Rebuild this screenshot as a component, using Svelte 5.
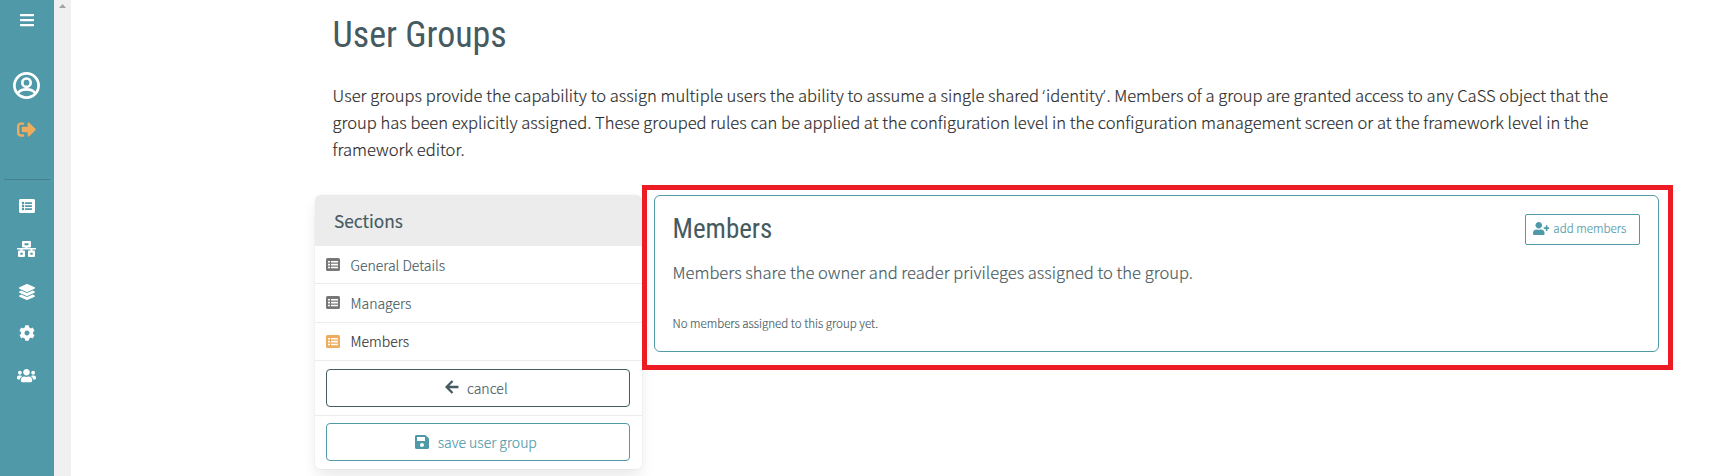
<script>
  const sections = [
    { label: 'General Details', active: false },
    { label: 'Managers', active: false },
    { label: 'Members', active: true }
  ];
</script>

{#snippet listAlt()}
  <svg class="list-icon" viewBox="0 0 512 512" fill="currentColor" aria-hidden="true"><path d="M464 480H48c-26.51 0-48-21.49-48-48V80c0-26.51 21.49-48 48-48h416c26.51 0 48 21.49 48 48v352c0 26.51-21.49 48-48 48zM128 120c-22.091 0-40 17.909-40 40s17.909 40 40 40 40-17.909 40-40-17.909-40-40-40zm0 96c-22.091 0-40 17.909-40 40s17.909 40 40 40 40-17.909 40-40-17.909-40-40-40zm0 96c-22.091 0-40 17.909-40 40s17.909 40 40 40 40-17.909 40-40-17.909-40-40-40zm288-136v-32c0-6.627-5.373-12-12-12H204c-6.627 0-12 5.373-12 12v32c0 6.627 5.373 12 12 12h200c6.627 0 12-5.373 12-12zm0 96v-32c0-6.627-5.373-12-12-12H204c-6.627 0-12 5.373-12 12v32c0 6.627 5.373 12 12 12h200c6.627 0 12-5.373 12-12zm0 96v-32c0-6.627-5.373-12-12-12H204c-6.627 0-12 5.373-12 12v32c0 6.627 5.373 12 12 12h200c6.627 0 12-5.373 12-12z"/></svg>
{/snippet}

{#snippet tableList()}
  <svg class="table-icon" viewBox="0 0 14 13" aria-hidden="true"><rect width="14" height="13" rx="1.6" fill="currentColor"/><path d="M2 3h2v1.600H2zM5 3h7v1.600H5zM2 5.800h2v1.700H2zM5 5.800h7v1.700H5zM2 8.700h2v1.600H2zM5 8.700h7v1.600H5z" fill="#fff"/></svg>
{/snippet}

<div class="app">
  <nav class="sidebar">
    <div class="slot menu">
      <svg width="14" height="16" viewBox="0 0 448 512" fill="currentColor"><path d="M16 132h416c8.837 0 16-7.163 16-16V76c0-8.837-7.163-16-16-16H16C7.163 60 0 67.163 0 76v40c0 8.837 7.163 16 16 16zm0 160h416c8.837 0 16-7.163 16-16v-40c0-8.837-7.163-16-16-16H16c-8.837 0-16 7.163-16 16v40c0 8.837 7.163 16 16 16zm0 160h416c8.837 0 16-7.163 16-16v-40c0-8.837-7.163-16-16-16H16c-8.837 0-16 7.163-16 16v40c0 8.837 7.163 16 16 16z"/></svg>
    </div>
    <div class="slot account">
      <svg width="27" height="27" viewBox="0 0 27 27" fill="none" stroke="currentColor"><circle cx="13.5" cy="13.5" r="12.1" stroke-width="2.7"/><circle cx="13.5" cy="10.7" r="4.2" stroke-width="2.6"/><path d="M4.600 21.200c2.100-2.600 5.300-3.800 8.900-3.800s6.800 1.200 8.900 3.800" stroke-width="2.6"/></svg>
    </div>
    <div class="slot logout">
      <svg width="19" height="19" viewBox="0 0 512 512" fill="currentColor"><path d="M497 273L329 441c-15 15-41 4.500-41-17v-96H152c-13.300 0-24-10.700-24-24v-96c0-13.300 10.700-24 24-24h136V88c0-21.400 25.900-32 41-17l168 168c9.300 9.400 9.300 24.600 0 34zM192 436v-40c0-6.600-5.400-12-12-12H96c-17.700 0-32-14.300-32-32V160c0-17.700 14.300-32 32-32h84c6.600 0 12-5.400 12-12V76c0-6.600-5.400-12-12-12H96c-53 0-96 43-96 96v192c0 53 43 96 96 96h84c6.600 0 12-5.400 12-12z"/></svg>
    </div>
    <div class="divider"></div>
    <div class="slot list">{@render listAlt()}</div>
    <div class="slot network">
      <svg width="19" height="16" viewBox="0 0 19 16" fill="currentColor" fill-rule="evenodd"><path d="M6 0h7q1 0 1 1v4.500q0 1-1 1h-2.500V7H19v1.500h-3.500v1H17q1 0 1 1V15q0 1-1 1h-5q-1 0-1-1v-4.500q0-1 1-1h1.500v-1h-8v1H7q1 0 1 1V15q0 1-1 1H2q-1 0-1-1v-4.500q0-1 1-1h1.500v-1H0V7h8.500v-.5H6q-1 0-1-1V1q0-1 1-1zM7.500 2.300v2h4v-2zM3.300 11.700v2h2.400v-2zm10 0v2h2.400v-2z"/></svg>
    </div>
    <div class="slot layers">
      <svg width="16" height="16" viewBox="0 0 512 512" fill="currentColor"><path d="M12.410 148.020l232.940 105.670c6.800 3.090 14.490 3.090 21.290 0l232.940-105.670c16.550-7.510 16.550-32.520 0-40.030L266.650 2.310a25.607 25.607 0 0 0-21.290 0L12.410 107.980c-16.550 7.510-16.550 32.530 0 40.040zm487.180 88.280l-58.090-26.330-161.640 73.270c-7.560 3.430-15.590 5.170-23.860 5.170s-16.290-1.740-23.860-5.170L70.510 209.970l-58.100 26.330c-16.550 7.500-16.550 32.500 0 40l232.940 105.590c6.800 3.080 14.490 3.080 21.290 0L499.590 276.300c16.550-7.500 16.550-32.500 0-40zm0 127.800l-57.870-26.230-161.860 73.370c-7.560 3.430-15.590 5.170-23.860 5.170s-16.290-1.740-23.860-5.170L70.290 337.870 12.410 364.100c-16.550 7.500-16.550 32.500 0 40l232.940 105.590c6.800 3.080 14.490 3.080 21.290 0L499.590 404.100c16.550-7.500 16.550-32.500 0-40z"/></svg>
    </div>
    <div class="slot cog">
      <svg width="16" height="16" viewBox="0 0 512 512" fill="currentColor"><path d="M487.400 315.700l-42.600-24.600c4.300-23.200 4.300-47 0-70.200l42.600-24.600c4.900-2.800 7.100-8.600 5.500-14-11.100-35.600-30-67.800-54.700-94.600-3.800-4.100-10-5.100-14.800-2.300L380.800 110c-17.900-15.400-38.500-27.300-60.800-35.100V25.800c0-5.600-3.900-10.500-9.400-11.700-36.700-8.200-74.300-7.800-109.200 0-5.500 1.200-9.400 6.100-9.400 11.700V75c-22.200 7.900-42.800 19.800-60.800 35.100L88.700 85.500c-4.900-2.800-11-1.900-14.800 2.300-24.700 26.700-43.600 58.900-54.700 94.600-1.700 5.400.6 11.200 5.500 14L67.300 221c-4.300 23.200-4.300 47 0 70.200l-42.600 24.600c-4.900 2.800-7.100 8.600-5.500 14 11.100 35.600 30 67.800 54.700 94.600 3.800 4.100 10 5.100 14.800 2.300l42.600-24.600c17.900 15.400 38.500 27.300 60.800 35.100v49.200c0 5.600 3.900 10.500 9.400 11.700 36.700 8.200 74.300 7.800 109.200 0 5.500-1.200 9.400-6.100 9.400-11.700v-49.200c22.200-7.900 42.800-19.800 60.800-35.100l42.600 24.600c4.900 2.800 11 1.900 14.800-2.300 24.700-26.700 43.600-58.900 54.700-94.600 1.500-5.500-.7-11.300-5.600-14.100zM256 336c-44.100 0-80-35.900-80-80s35.900-80 80-80 80 35.900 80 80-35.900 80-80 80z"/></svg>
    </div>
    <div class="slot users">
      <svg width="19" height="15.200" viewBox="0 0 640 512" fill="currentColor"><path d="M96 224c35.300 0 64-28.700 64-64s-28.700-64-64-64-64 28.700-64 64 28.700 64 64 64zm448 0c35.300 0 64-28.700 64-64s-28.700-64-64-64-64 28.700-64 64 28.700 64 64 64zm32 32h-64c-17.600 0-33.500 7.100-45.100 18.600 40.300 22.100 68.900 62 75.100 109.400h66c17.700 0 32-14.300 32-32v-32c0-35.300-28.700-64-64-64zm-256 0c61.900 0 112-50.100 112-112S381.900 32 320 32 208 82.100 208 144s50.100 112 112 112zm76.800 32h-8.300c-20.800 10-43.900 16-68.500 16s-47.600-6-68.500-16h-8.300C179.600 288 128 339.600 128 403.200V432c0 26.500 21.500 48 48 48h288c26.500 0 48-21.500 48-48v-28.800c0-63.600-51.600-115.200-115.200-115.200zm-223.700-13.400C161.500 263.100 145.600 256 128 256H64c-35.300 0-64 28.700-64 64v32c0 17.700 14.300 32 32 32h65.900c6.300-47.400 34.900-87.300 75.200-109.400z"/></svg>
    </div>
  </nav>

  <div class="scrollbar"><svg width="7" height="4" viewBox="0 0 7 4"><path d="M3.500 0L7 4H0z" fill="#a3a3a3"/></svg></div>

  <main>
    <header class="intro">
      <h1>User Groups</h1>
      <p>User groups provide the capability to assign multiple users the ability to assume a single shared <span class="quote">‘</span>identity<span class="quote">’</span>. Members of a group are granted access to any CaSS object that the<br>group has been explicitly assigned. These grouped rules can be applied at the configuration level in the configuration management screen or at the framework level in the<br>framework editor.</p>
    </header>

    <div class="columns">
      <aside class="panel">
        <h2>Sections</h2>
        {#each sections as section}
          <div class="row" class:active={section.active}>
            {@render tableList()}
            <span>{section.label}</span>
          </div>
        {/each}
        <div class="action first">
          <button class="cancel">
            <svg width="14" height="14" viewBox="0 0 14 14" fill="none" stroke="currentColor" stroke-width="2.300"><path d="M7.500 1L1.600 7l5.900 6M1.800 7H13.500"/></svg>
            <span>cancel</span>
          </button>
        </div>
        <div class="action">
          <button class="save">
            <svg width="14" height="16" viewBox="0 0 448 512" fill="currentColor"><path d="M433.941 129.941l-83.882-83.882A48 48 0 0 0 316.118 32H48C21.490 32 0 53.490 0 80v352c0 26.510 21.490 48 48 48h352c26.510 0 48-21.490 48-48V163.882a48 48 0 0 0-14.059-33.941zM224 416c-35.346 0-64-28.654-64-64 0-35.346 28.654-64 64-64s64 28.654 64 64c0 35.346-28.654 64-64 64zm96-304.520V212c0 6.627-5.373 12-12 12H76c-6.627 0-12-5.373-12-12V108c0-6.627 5.373-12 12-12h228.520c3.183 0 6.235 1.264 8.485 3.515l3.480 3.480A11.996 11.996 0 0 1 320 111.480z"/></svg>
            <span>save user group</span>
          </button>
        </div>
      </aside>

      <div class="highlight">
        <section class="card">
          <div class="card-head">
            <h3>Members</h3>
            <button class="add">
              <svg width="16.500" height="13.200" viewBox="0 0 640 512" fill="currentColor"><path d="M624 208h-64v-64c0-8.800-7.200-16-16-16h-32c-8.800 0-16 7.200-16 16v64h-64c-8.800 0-16 7.200-16 16v32c0 8.800 7.200 16 16 16h64v64c0 8.800 7.200 16 16 16h32c8.800 0 16-7.200 16-16v-64h64c8.800 0 16-7.200 16-16v-32c0-8.800-7.200-16-16-16zm-400 48c70.700 0 128-57.300 128-128S294.700 0 224 0 96 57.300 96 128s57.300 128 128 128zm89.600 32h-16.700c-22.200 10.200-46.900 16-72.900 16s-50.600-5.800-72.900-16h-16.700C60.200 288 0 348.200 0 422.400V464c0 26.500 21.500 48 48 48h352c26.500 0 48-21.500 48-48v-41.600c0-74.200-60.200-134.400-134.400-134.400z"/></svg>
              <span>add members</span>
            </button>
          </div>
          <p class="lead">Members share the owner and reader privileges assigned to the group.</p>
          <p class="empty">No members assigned to this group yet.</p>
        </section>
      </div>
    </div>
  </main>
</div>

<style>
  :global(body) { margin: 0; background: #fff; overflow: hidden; }
  * { box-sizing: border-box; }
  h1, h2, h3, p { margin: 0; }
  svg { display: block; flex: none; }
  .app {
    display: flex;
    height: 476px;
    overflow: hidden;
    font-family: "Noto Sans CJK SC", "Open Sans", sans-serif;
    font-weight: 300;
    color: #465a61;
  }
  .sidebar { width: 54px; flex: none; background: #5099a9; color: #fff; display: flex; flex-direction: column; }
  .slot { display: flex; align-items: center; justify-content: center; height: 42px; padding-right: 1px; }
  .menu { height: 40px; padding-right: 1px; }
  .account { height: 91px; }
  .logout { height: 20px; margin-top: -12px; color: #eeac5f; }
  .divider { height: 1px; margin: 40px 4px 0; background: #437f8c; }
  .list { height: 52px; padding-right: 1px; }
  .network { height: 34px; }
  .layers { height: 51px; padding-right: 1px; }
  .cog { height: 32px; padding-right: 1px; }
  .users { height: 54px; }
  .list-icon { width: 16px; height: 16px; }
  .scrollbar { width: 17px; flex: none; background: #f0f0f0; display: flex; justify-content: center; padding-top: 4px; }
  main { flex: 1; padding: 15px 37px 0 244px; }
  .intro { padding-left: 17.500px; height: 170px; }
  h1 { font: 400 36px/40px "Roboto Condensed", Roboto, sans-serif; }
  .intro p { padding-top: 27px; font-size: 16.555px; line-height: 27px; color: #2a2a2a; white-space: nowrap; -webkit-text-stroke: .15px; }
  .quote { font-family: "Open Sans", sans-serif; line-height: 1; letter-spacing: 1px; }
  .columns { display: flex; align-items: flex-start; }
  .panel {
    width: 327px;
    height: 274px;
    margin-top: 10px;
    flex: none;
    border-radius: 6px;
    overflow: hidden;
    box-shadow: 0 8px 16px -2px rgba(10, 10, 10, .1), 0 0 0 1px rgba(10, 10, 10, .02);
  }
  h2 { height: 51px; padding-left: 19px; background: #ececec; font-size: 17.300px; font-weight: 400; line-height: 51px; -webkit-text-stroke: .15px; }
  .row { display: flex; align-items: center; gap: 10.500px; height: 38px; padding-left: 11px; border-bottom: 1px solid #ececec; font-size: 14px; }
  .row:nth-child(3) { height: 39px; padding-bottom: 1px; }
  .row span { padding-top: 1px; -webkit-text-stroke: .15px; }
  .table-icon { width: 14px; height: 13px; color: #777; }
  .active { color: #333; }
  .active span { padding: 0 0 1px; }
  .active .table-icon { color: #eeac5f; }
  .action { height: 53px; padding: 7px 12px 0 11px; }
  .first { height: 55px; padding-top: 8px; border-bottom: 1px solid #ececec; }
  button {
    display: flex;
    align-items: center;
    justify-content: center;
    background: #fff;
    border: 1px solid #5099a9;
    color: #5099a9;
    font-family: inherit;
    font-weight: 300;
    padding: 0;
    -webkit-text-stroke: .15px;
  }
  .action button { width: 304px; height: 38px; border-radius: 4px; font-size: 14px; gap: 8.500px; padding-right: 4px; }
  .action .cancel { color: #465a61; border-color: #465a61; padding-right: 3.500px; gap: 8px; }
  .cancel svg { margin-bottom: 2px; }
  .highlight { width: 1031px; height: 185px; border: 5px solid #ed1c24; padding: 5px 9px 0 7px; }
  .card { height: 157px; border: 1px solid #5099a9; border-radius: 6px; padding: 18px 18px 0 17.500px; }
  .card-head { display: flex; justify-content: space-between; }
  h3 { font: 400 27px/30px "Roboto Condensed", Roboto, sans-serif; }
  .add { width: 115px; height: 31px; border-radius: 2px; font-size: 11.600px; gap: 4px; padding: 0 6px 2px 0; }
  .add span { margin-bottom: 2px; }
  .lead { padding-top: 14px; font-size: 16.560px; line-height: 27px; -webkit-text-stroke: .15px; }
  .empty { padding-top: 27px; font-size: 11.560px; line-height: 20px; -webkit-text-stroke: .15px; }
</style>
